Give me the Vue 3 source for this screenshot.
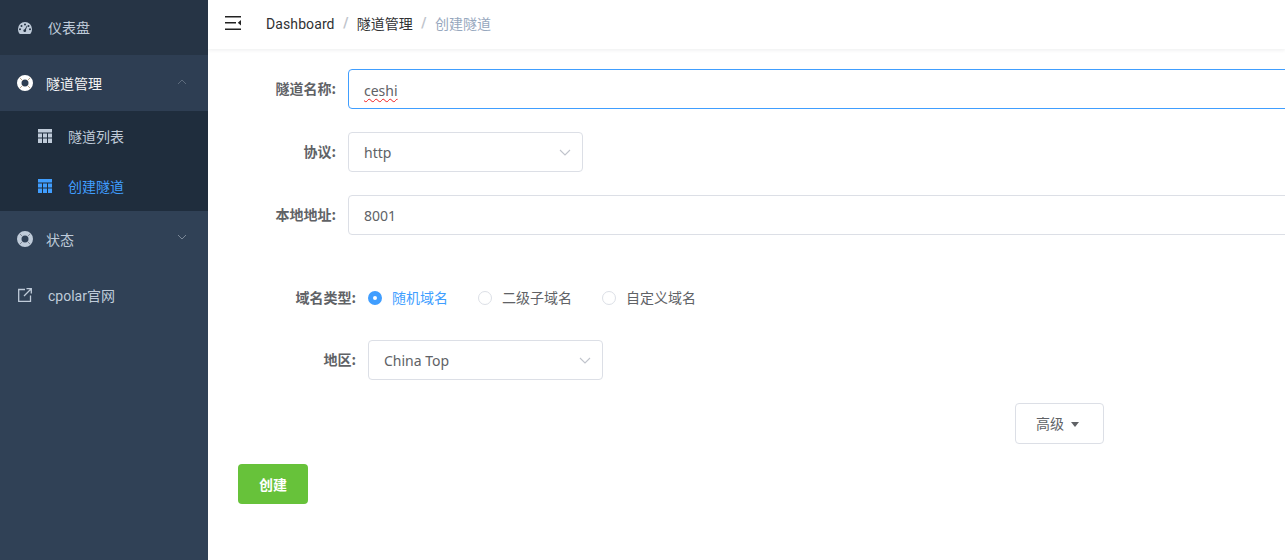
<script setup>
const regions = ['随机域名', '二级子域名', '自定义域名']
</script>

<template>
  <div class="layout">
    <aside class="sidebar">
      <div class="item dash">
        <svg class="ic gauge" viewBox="0 0 14 12"><path fill="#bfcbd9" fill-rule="evenodd" d="M7 0a7 7 0 0 1 7 7c0 1.900-.5 3.400-1.300 4.500-.2.300-.5.500-.8.500H2.100c-.3 0-.6-.2-.8-.5C.5 10.400 0 8.900 0 7a7 7 0 0 1 7-7zM7 1.500a1 1 0 1 0 0 2 1 1 0 0 0 0-2zM3.500 3a1 1 0 1 0 0 2 1 1 0 0 0 0-2zM10.500 3a1 1 0 1 0 0 2 1 1 0 0 0 0-2zM2 6.200a1 1 0 1 0 0 2 1 1 0 0 0 0-2zM12 6.200a1 1 0 1 0 0 2 1 1 0 0 0 0-2zM8.800 3.800 6.800 7.200a1.400 1.400 0 1 0 1.100.6l1.400-3.800z"/></svg>
        <span class="t48 up">仪表盘</span>
      </div>
      <div class="item open">
        <svg class="ic buoy" viewBox="0 0 16 16"><circle cx="8" cy="8" r="5.750" fill="none" stroke="#fff" stroke-width="4.500"/><path d="M2.600 2.600 5.600 5.600M13.400 2.600 10.400 5.600M2.600 13.400 5.600 10.400M13.400 13.400 10.400 10.400" stroke="#b9a58e" stroke-width="1"/></svg>
        <span class="t46 white">隧道管理</span>
        <svg class="chev chev-up" viewBox="0 0 10 6"><path d="M1 5 5 1l4 4" fill="none" stroke="#5d6b7c" stroke-width="1"/></svg>
      </div>
      <div class="sub">
        <svg class="ic grid" viewBox="0 0 14 14"><path fill="#bfcbd9" d="M0 0h14v3.500H0zM0 4.500h4v4H0zM5 4.500h4v4H5zM10 4.500h4v4h-4zM0 9.500h4V14H0zM5 9.500h4V14H5zM10 9.500h4V14h-4z"/></svg>
        <span>隧道列表</span>
      </div>
      <div class="sub active">
        <svg class="ic grid" viewBox="0 0 14 14"><path fill="#409eff" d="M0 0h14v3.500H0zM0 4.500h4v4H0zM5 4.500h4v4H5zM10 4.500h4v4h-4zM0 9.500h4V14H0zM5 9.500h4V14H5zM10 9.500h4V14h-4z"/></svg>
        <span>创建隧道</span>
      </div>
      <div class="item">
        <svg class="ic buoy" viewBox="0 0 16 16"><circle cx="8" cy="8" r="5.750" fill="none" stroke="#bfcbd9" stroke-width="4.500"/><path d="M2.600 2.600 5.600 5.600M13.400 2.600 10.400 5.600M2.600 13.400 5.600 10.400M13.400 13.400 10.400 10.400" stroke="#7f8794" stroke-width="1"/></svg>
        <span class="t46">状态</span>
        <svg class="chev" viewBox="0 0 10 6"><path d="M1 1l4 4 4-4" fill="none" stroke="#7a8797" stroke-width="1"/></svg>
      </div>
      <div class="item">
        <svg class="ic link" viewBox="0 0 14 14"><path d="M7 1.500H.7v11.800h11.800V7.500M6 8l7-7M8.500.7h4.800v4.800" fill="none" stroke="#bfcbd9" stroke-width="1.300"/></svg>
        <span class="t48">cpolar官网</span>
      </div>
    </aside>

    <main class="main">
      <header class="nav">
        <svg class="ham" viewBox="0 0 16 14"><path d="M0 0h16v1.500H0zM0 6h11v1.500H0zM0 12.500h16V14H0z" fill="#222"/><path d="M16 4v5.500L12.800 6.800z" fill="#222"/></svg>
        <span class="crumb first">Dashboard</span><i class="sep">/</i>
        <span class="crumb">隧道管理</span><i class="sep">/</i>
        <span class="crumb last">创建隧道</span>
      </header>

      <section class="form">
        <div class="row">
          <label class="lab">隧道名称:</label>
          <div class="input focus"><span class="wavy">ceshi</span></div>
        </div>
        <div class="row">
          <label class="lab">协议:</label>
          <div class="input sel"><span>http</span>
            <svg class="arrow" viewBox="0 0 12 7"><path d="M1 1l5 5 5-5" fill="none" stroke="#c0c4cc" stroke-width="1.100"/></svg>
          </div>
        </div>
        <div class="row">
          <label class="lab">本地地址:</label>
          <div class="input"><span>8001</span></div>
        </div>

        <div class="nested">
          <div class="row radios">
            <label class="lab">域名类型:</label>
            <div class="radio-group">
              <div v-for="(r, i) in regions" :key="r" class="radio" :class="{ on: i === 0 }">
                <span class="dot"></span><span class="rt">{{ r }}</span>
              </div>
            </div>
          </div>
          <div class="row">
            <label class="lab">地区:</label>
            <div class="input sel"><span>China Top</span>
              <svg class="arrow" viewBox="0 0 12 7"><path d="M1 1l5 5 5-5" fill="none" stroke="#c0c4cc" stroke-width="1.100"/></svg>
            </div>
          </div>
        </div>

        <button class="adv"><span class="advt">高级</span><span class="caret"></span></button>
        <button class="create"><span>创建</span></button>
      </section>
    </main>
  </div>
</template>

<style>
html, body { margin: 0; overflow: hidden; }
</style>

<style scoped>
.layout {
  display: flex;
  width: 1285px;
  height: 560px;
  overflow: hidden;
  background: #fff;
  font-family: "Noto Sans", "Noto Sans CJK SC", sans-serif;
  font-size: 14px;
  color: #606266;
}
.sidebar { width: 208px; flex: none; background: #304156; color: #bfcbd9; font-family: Roboto, "Noto Sans CJK SC", sans-serif; }
.item {
  display: flex;
  align-items: center;
  height: 56px;
  position: relative;
  padding-left: 17px;
}
.dash { height: 55px; background: #263445; }
.up { position: relative; top: -1px; }
.open { background: #2e3e53; }
.ic { display: block; flex: none; }
.gauge { width: 14px; height: 12px; margin-left: 1px; margin-top: 1px; }
.buoy { width: 16px; height: 16px; }
.link { width: 14px; height: 14px; margin-left: 1px; }
.grid { width: 14px; height: 14px; }
.t48 { margin-left: 16px; }
.t46 { margin-left: 13px; }
.white { color: #f4f4f5; }
.chev { position: absolute; left: 177px; top: 23px; width: 10px; height: 6px; }
.chev-up { top: 24px; }
.sub {
  display: flex;
  align-items: center;
  gap: 16px;
  height: 50px;
  padding-left: 38px;
  background: #1f2d3d;
}
.sub.active { color: #409eff; }
.main { flex: 1; min-width: 0; overflow: hidden; }
.nav {
  display: flex;
  align-items: center;
  height: 49px;
  box-sizing: border-box;
  padding-left: 17px;
  padding-bottom: 3px;
  box-shadow: 0 1px 4px rgba(0, 21, 41, .08);
  color: #303133;
  font-family: Roboto, "Noto Sans CJK SC", sans-serif;
}
.ham { width: 16px; height: 14px; margin-right: 25px; flex: none; }
.crumb { white-space: nowrap; }
.first { position: relative; top: 1px; letter-spacing: .1px; }
.last { color: #97a8be; }
.sep { font-style: normal; font-weight: 700; color: #c0c4cc; margin: 0 8.500px; }
.form { padding: 20px 0 0 30px; }
.row { display: flex; align-items: center; height: 40px; margin-bottom: 23px; }
.lab {
  width: 110px;
  flex: none;
  box-sizing: border-box;
  padding-right: 12px;
  padding-bottom: 2px;
  text-align: right;
  font-weight: 700;
  font-size: 14px;
  font-family: "Noto Sans CJK SC", sans-serif;
  color: #606266;
}
.input {
  position: relative;
  display: flex;
  align-items: center;
  flex: none;
  box-sizing: border-box;
  width: 1100px;
  height: 40px;
  padding-left: 15px;
  border: 1px solid #dcdfe6;
  border-radius: 4px;
  color: #606266;
}
.focus { border-color: #409eff; }
.wavy {
  position: relative;
  top: 1px;
  text-decoration: underline wavy #f02020;
  text-decoration-thickness: 1.200px;
  text-underline-offset: 2px;
}
.sel { width: 235px; }
.arrow { position: absolute; right: 11px; top: 16px; width: 12px; height: 7px; }
.nested { padding-left: 20px; margin-top: 43px; }
.radios { margin-bottom: 22px; }
.radio-group { display: flex; font-size: 14px; font-family: "Noto Sans CJK SC", sans-serif; }
.radio { display: flex; align-items: center; gap: 10px; margin-right: 30px; }
.rt { position: relative; top: -1px; }
.radio.on { color: #409eff; }
.dot {
  width: 14px;
  height: 14px;
  box-sizing: border-box;
  border: 1px solid #dcdfe6;
  border-radius: 50%;
}
.on .dot { border: 5px solid #409eff; background: #fff; }
.adv {
  display: flex;
  align-items: center;
  box-sizing: border-box;
  width: 89px;
  height: 41px;
  margin: 0 0 20px 777px;
  padding: 0 0 0 20px;
  background: #fff;
  border: 1px solid #dcdfe6;
  border-radius: 4px;
  font: inherit;
  font-size: 14px;
  color: #606266;
  font-family: "Noto Sans CJK SC", sans-serif;
}
.advt { position: relative; top: -1px; }
.caret {
  width: 0;
  height: 0;
  margin-left: 7px;
  margin-top: 1px;
  border: 4.500px solid transparent;
  border-top: 5px solid #606266;
  border-bottom: 0;
}
.create {
  display: block;
  width: 70px;
  height: 40px;
  padding: 0 0 1px;
  background: #67c23a;
  border: 0;
  border-radius: 4px;
  font: inherit;
  font-weight: 700;
  color: #fff;
  font-family: "Noto Sans CJK SC", sans-serif;
}
</style>
